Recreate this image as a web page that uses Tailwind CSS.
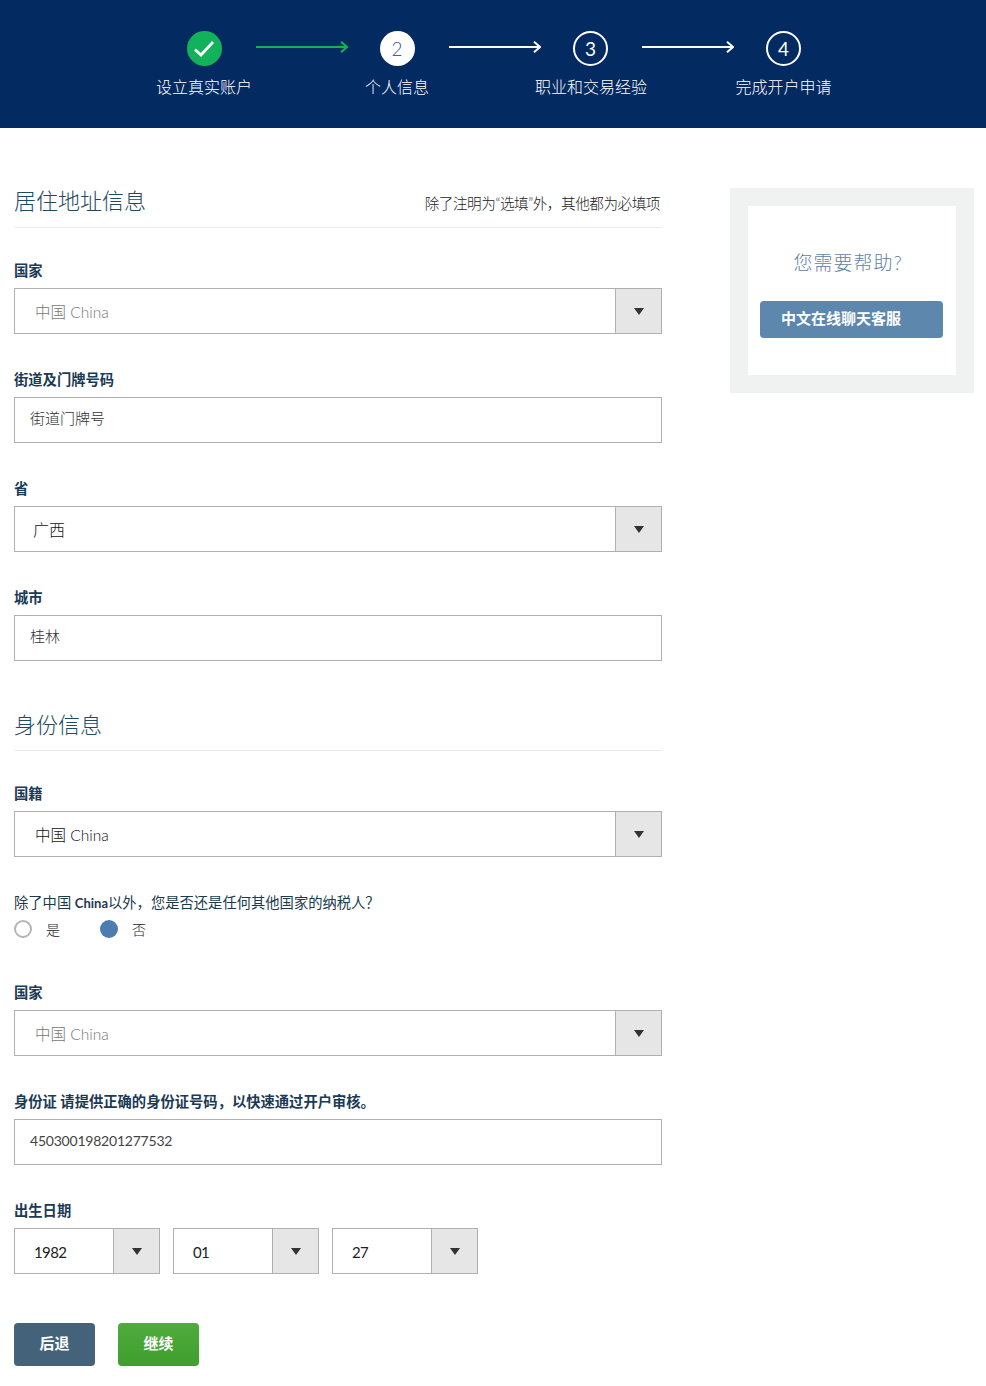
<!DOCTYPE html>
<html lang="zh-CN">
<head>
  <meta charset="UTF-8">
  <meta name="viewport" content="width=device-width, initial-scale=1.0">
  <title>个人信息</title>
  <script src="https://cdn.jsdelivr.net/npm/@tailwindcss/browser@4"></script>
</head>
<body class="bg-white font-['Lato','Noto_Sans_CJK_SC',sans-serif] text-[#333]">
  <!-- steps -->
  <header class="h-[128px] bg-[#042a62] pt-[31px] pl-[154px] flex text-white">
    <div class="w-[100px] flex flex-col items-center">
      <div class="w-[35px] h-[35px] rounded-full bg-[#12b25a] flex items-center justify-center">
        <svg width="22" height="18" viewBox="0 0 22 18" fill="none" stroke="#fff" stroke-width="2.8"><path d="M2 9.5 8 15 20 2"/></svg>
      </div>
      <div class="mt-[10px] text-[16px] leading-[22px] font-light whitespace-nowrap">设立真实账户</div>
    </div>
    <svg class="mt-[10px] ml-[1px] -mr-[1px] shrink-0" width="93" height="12" viewBox="0 0 93 12" fill="none" stroke="#12b25a" stroke-width="2"><path d="M1 6H92M86 .8 92 6l-6 5.2"/></svg>
    <div class="w-[100px] flex flex-col items-center">
      <div class="w-[35px] h-[35px] pt-[2px] rounded-full bg-white text-[#4a5c94] flex items-center justify-center text-[19px] font-light">2</div>
      <div class="mt-[10px] text-[16px] leading-[22px] font-light whitespace-nowrap">个人信息</div>
    </div>
    <svg class="mt-[10px] ml-[1px] -mr-[1px] shrink-0" width="93" height="12" viewBox="0 0 93 12" fill="none" stroke="#fff" stroke-width="2"><path d="M1 6H92M86 .8 92 6l-6 5.2"/></svg>
    <div class="w-[100px] flex flex-col items-center">
      <div class="w-[35px] h-[35px] pt-[2px] pl-[1px] rounded-full border-[2.5px] border-white flex items-center justify-center text-[19px]">3</div>
      <div class="mt-[10px] pl-[2px] text-[16px] leading-[22px] font-light whitespace-nowrap">职业和交易经验</div>
    </div>
    <svg class="mt-[10px] ml-[1px] -mr-[1px] shrink-0" width="93" height="12" viewBox="0 0 93 12" fill="none" stroke="#fff" stroke-width="2"><path d="M1 6H92M86 .8 92 6l-6 5.2"/></svg>
    <div class="w-[100px] flex flex-col items-center">
      <div class="w-[35px] h-[35px] pt-[2px] pl-[1px] rounded-full border-[2.5px] border-white flex items-center justify-center text-[19px]">4</div>
      <div class="mt-[10px] pl-[1px] text-[16px] leading-[22px] font-light whitespace-nowrap">完成开户申请</div>
    </div>
  </header>

  <div class="flex items-start pl-[14px]">
    <main class="w-[648px] shrink-0 pt-[58px]">
      <!-- address -->
      <div class="h-[42px] border-b border-[#ececec] flex justify-between items-start">
        <h2 class="text-[22px] leading-[30px] font-light text-[#1f4a5f]">居住地址信息</h2>
        <p class="mt-[6px] mr-[2px] text-[14.6px] leading-[24px] font-light text-[#222] tracking-[-0.45px]">除了注明为“选填”外，其他都为必填项</p>
      </div>

      <label class="block mt-[33px] mb-[7px] h-5 text-[14.3px] leading-5 font-bold text-[#1b3a55]">国家</label>
      <div class="h-[46px] flex border border-[#b0b0b0]">
        <div class="flex-1 pl-[20px] text-[15.5px] leading-[46px] text-[#777] font-light">中国 China</div>
        <div class="w-[46px] bg-[#e6e6e6] border-l border-[#b0b0b0] flex items-center justify-center">
          <svg width="10" height="7" viewBox="0 0 10 7" fill="#333"><path d="M0 0h10L5 7z"/></svg>
        </div>
      </div>

      <label class="block mt-[36px] mb-[7px] h-5 text-[14.3px] leading-5 font-bold text-[#1b3a55]">街道及门牌号码</label>
      <div class="h-[46px] border border-[#b0b0b0] pl-[15px] text-[15px] leading-[41px] text-[#333] font-light">街道门牌号</div>

      <label class="block mt-[36px] mb-[7px] h-5 text-[14.3px] leading-5 font-bold text-[#1b3a55]">省</label>
      <div class="h-[46px] flex border border-[#b0b0b0]">
        <div class="flex-1 pl-[18px] text-[16px] leading-[46px] text-[#111] font-light">广西</div>
        <div class="w-[46px] bg-[#e6e6e6] border-l border-[#b0b0b0] flex items-center justify-center">
          <svg width="10" height="7" viewBox="0 0 10 7" fill="#333"><path d="M0 0h10L5 7z"/></svg>
        </div>
      </div>

      <label class="block mt-[36px] mb-[7px] h-5 text-[14.3px] leading-5 font-bold text-[#1b3a55]">城市</label>
      <div class="h-[46px] border border-[#b0b0b0] pl-[15px] text-[15px] leading-[41px] text-[#333] font-light">桂林</div>

      <!-- identity -->
      <div class="mt-[49px] h-[41px] border-b border-[#ececec]">
        <h2 class="text-[22px] leading-[30px] font-light text-[#1f4a5f]">身份信息</h2>
      </div>

      <label class="block mt-[33px] mb-[7px] h-5 text-[14.3px] leading-5 font-bold text-[#1b3a55]">国籍</label>
      <div class="h-[46px] flex border border-[#b0b0b0]">
        <div class="flex-1 pl-[20px] text-[15.5px] leading-[46px] text-[#111] font-light">中国 China</div>
        <div class="w-[46px] bg-[#e6e6e6] border-l border-[#b0b0b0] flex items-center justify-center">
          <svg width="10" height="7" viewBox="0 0 10 7" fill="#333"><path d="M0 0h10L5 7z"/></svg>
        </div>
      </div>

      <p class="mt-[36px] h-5 text-[14.3px] leading-5 text-[#1b3a4a] whitespace-nowrap">除了中国 <b class="font-bold text-[13px] text-[#1b3a55]">China</b>以外，您是否还是任何其他国家的纳税人？</p>
      <div class="mt-[6px] h-5 flex items-center text-[14px] font-light text-[#222]">
        <span class="w-[18px] h-[18px] rounded-full border-2 border-[#b5b5b5]"></span>
        <span class="ml-[14px] w-[54px]">是</span>
        <span class="w-[18px] h-[18px] rounded-full bg-[#4d7cb0]"></span>
        <span class="ml-[14px]">否</span>
      </div>

      <label class="block mt-[44px] mb-[7px] h-5 text-[14.3px] leading-5 font-bold text-[#1b3a55]">国家</label>
      <div class="h-[46px] flex border border-[#b0b0b0]">
        <div class="flex-1 pl-[20px] text-[15.5px] leading-[46px] text-[#777] font-light">中国 China</div>
        <div class="w-[46px] bg-[#e6e6e6] border-l border-[#b0b0b0] flex items-center justify-center">
          <svg width="10" height="7" viewBox="0 0 10 7" fill="#333"><path d="M0 0h10L5 7z"/></svg>
        </div>
      </div>

      <label class="block mt-[36px] mb-[7px] h-5 text-[14.3px] leading-5 font-bold text-[#1b3a55]">身份证 请提供正确的身份证号码，以快速通过开户审核。</label>
      <div class="h-[46px] border border-[#b0b0b0] pl-[15px] text-[14px] leading-[42px] tracking-[-0.22px] text-[#444]">450300198201277532</div>

      <label class="block mt-[36px] mb-[7px] h-5 text-[14.3px] leading-5 font-bold text-[#1b3a55]">出生日期</label>
      <div class="flex gap-[13px]">
        <div class="w-[146px] h-[46px] flex border border-[#b0b0b0]">
          <div class="flex-1 pl-[19px] text-[15px] leading-[46px] tracking-[-0.6px] text-[#222]">1982</div>
          <div class="w-[46px] bg-[#e6e6e6] border-l border-[#b0b0b0] flex items-center justify-center">
            <svg width="10" height="7" viewBox="0 0 10 7" fill="#333"><path d="M0 0h10L5 7z"/></svg>
          </div>
        </div>
        <div class="w-[146px] h-[46px] flex border border-[#b0b0b0]">
          <div class="flex-1 pl-[19px] text-[15px] leading-[46px] tracking-[-0.6px] text-[#222]">01</div>
          <div class="w-[46px] bg-[#e6e6e6] border-l border-[#b0b0b0] flex items-center justify-center">
            <svg width="10" height="7" viewBox="0 0 10 7" fill="#333"><path d="M0 0h10L5 7z"/></svg>
          </div>
        </div>
        <div class="w-[146px] h-[46px] flex border border-[#b0b0b0]">
          <div class="flex-1 pl-[19px] text-[15px] leading-[46px] tracking-[-0.6px] text-[#222]">27</div>
          <div class="w-[46px] bg-[#e6e6e6] border-l border-[#b0b0b0] flex items-center justify-center">
            <svg width="10" height="7" viewBox="0 0 10 7" fill="#333"><path d="M0 0h10L5 7z"/></svg>
          </div>
        </div>
      </div>

      <div class="mt-[49px] flex gap-[23px]">
        <button class="w-[81px] h-[43px] pb-[2px] rounded-[4px] bg-[#44627a] text-white text-[15px] font-bold">后退</button>
        <button class="w-[81px] h-[43px] pb-[2px] rounded-[4px] bg-gradient-to-b from-[#4fab3d] to-[#3f9f2d] text-white text-[15px] font-bold">继续</button>
      </div>
    </main>

    <!-- help box -->
    <aside class="ml-[68px] mt-[60px] w-[244px] h-[205px] bg-[#f0f2f2] p-[18px]">
      <div class="w-[208px] h-[169px] bg-white px-[12px] pt-[44px]">
        <p class="text-[19px] leading-[26px] font-light text-[#5f7fa5] text-center pr-[8px] tracking-[1px]">您需要帮助?</p>
        <button class="mt-[25px] w-[183px] h-[37px] rounded-[4px] bg-[#5d87ad] text-white text-[15px] font-bold text-left pl-[21px] pb-[3px]">中文在线聊天客服</button>
      </div>
    </aside>
  </div>
</body>
</html>
